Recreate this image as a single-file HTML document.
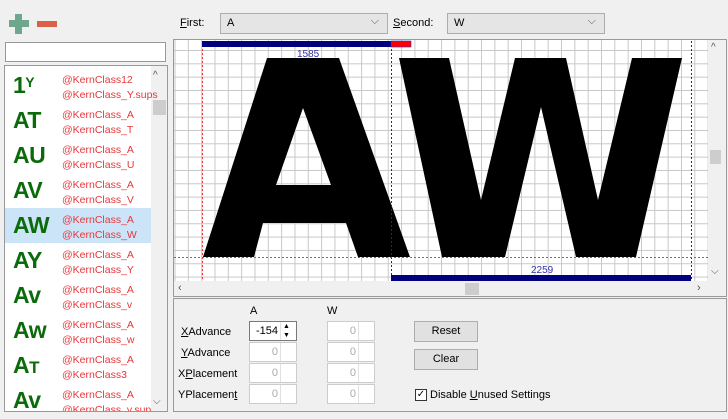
<!DOCTYPE html>
<html><head><style>
*{box-sizing:border-box}
body{margin:0;width:728px;height:419px;background:#f0f0f0;font-family:"Liberation Sans",sans-serif;font-size:11px;color:#000;position:relative;overflow:hidden}
.a{position:absolute}
.row{position:absolute;left:5px;width:146px;height:35px}
.g{position:absolute;left:8px;top:4px;font-weight:bold;font-size:23px;color:#0b6b0b;letter-spacing:-0.5px}
.t{position:absolute;left:57px;top:5px;color:#e8373a;font-size:10.5px;line-height:15px}
.lbl{position:absolute;font-size:11px}
.spin{position:absolute;width:48px;height:20px;background:#fff;border:1px solid #ccc;color:#aaa;text-align:right;padding-right:18px;line-height:18px}
.spin:after{content:"";position:absolute;right:0;top:0;width:15px;height:18px;border-left:1px solid #e0e0e0}
.btn{position:absolute;width:64px;height:21px;background:#e1e1e1;border:1px solid #adadad;text-align:center;line-height:19px}
.combo{position:absolute;height:21px;background:#e5e5e5;border:1px solid #adadad;padding-left:6px;line-height:19px}
.combo:after{content:"⌵";position:absolute;right:8px;top:-2px;color:#555}
</style></head><body>
<!-- plus minus -->
<div class="a" style="left:15px;top:14px;width:7px;height:20px;background:#6fa68e"></div>
<div class="a" style="left:9px;top:20px;width:20px;height:7px;background:#6fa68e"></div>
<div class="a" style="left:37px;top:21px;width:20px;height:6px;background:#dc6048"></div>
<div class="a" style="left:5px;top:42px;width:161px;height:20px;background:#fff;border:1px solid #999"></div>
<!-- list -->
<div class="a" style="left:4px;top:65px;width:164px;height:347px;background:#fff;border:1px solid #999;overflow:hidden">
<div class="a" style="left:146px;top:0;width:16px;height:345px;background:#f0f0f0"></div>
<div class="a" style="left:148px;top:4px;color:#555;font-size:10px">^</div>
<div class="a" style="left:148px;top:34px;width:13px;height:15px;background:#cdcdcd"></div>
<div class="a" style="left:148px;top:330px;color:#555;font-size:10px">⌵</div>
</div>
<div class="row" style="top:68px"><div class="g">1<span style="font-size:14px;vertical-align:6px">Y</span></div><div class="t">@KernClass12<br>@KernClass_Y.sups</div></div>
<div class="row" style="top:103px"><div class="g">AT</div><div class="t">@KernClass_A<br>@KernClass_T</div></div>
<div class="row" style="top:138px"><div class="g">AU</div><div class="t">@KernClass_A<br>@KernClass_U</div></div>
<div class="row" style="top:173px"><div class="g">AV</div><div class="t">@KernClass_A<br>@KernClass_V</div></div>
<div class="row" style="top:208px;background:#cce4f7"><div class="g">AW</div><div class="t">@KernClass_A<br>@KernClass_W</div></div>
<div class="row" style="top:243px"><div class="g">AY</div><div class="t">@KernClass_A<br>@KernClass_Y</div></div>
<div class="row" style="top:278px"><div class="g">Av</div><div class="t">@KernClass_A<br>@KernClass_v</div></div>
<div class="row" style="top:313px"><div class="g">Aw</div><div class="t">@KernClass_A<br>@KernClass_w</div></div>
<div class="row" style="top:348px"><div class="g">A<span style="font-size:17px">T</span></div><div class="t">@KernClass_A<br>@KernClass3</div></div>
<div class="row" style="top:383px;height:28px;overflow:hidden"><div class="g">Av</div><div class="t">@KernClass_A<br>@KernClass_v.sups</div></div>
<!-- top combos -->
<div class="lbl" style="left:180px;top:17px"><u>F</u>irst:</div>
<div class="combo" style="left:220px;top:13px;width:168px">A</div>
<div class="lbl" style="left:393px;top:17px"><u>S</u>econd:</div>
<div class="combo" style="left:447px;top:13px;width:158px">W</div>
<!-- canvas -->
<div class="a" style="left:173px;top:39px;width:554px;height:258px;border:1px solid #999;background:#f0f0f0"></div>
<div class="a" style="left:174px;top:40px;width:534px;height:241px;background-color:#fff;background-image:linear-gradient(90deg,#c8c8c8 1px,transparent 1px),linear-gradient(#c8c8c8 1px,transparent 1px);background-size:13.33px 13.33px;background-position:0.5px 10px"></div>
<svg class="a" style="left:174px;top:40px" width="534" height="241">
<g transform="translate(-174,-40)">
<path d="M267,58H339L410,257H358L346,223H263L254,257H203Z M303,108L331,185H276Z" fill="#000" fill-rule="evenodd"/>
<path d="M399,58H449L481,200L515,58H566L598,200L632,58H682L636,257H576L541,107L505,257H442Z" fill="#000"/>
<line x1="202.5" y1="41" x2="202.5" y2="281" stroke="#f33" stroke-dasharray="2,2"/>
<line x1="391.5" y1="41" x2="391.5" y2="281" stroke="#229" stroke-dasharray="2,2"/>
<line x1="691.5" y1="41" x2="691.5" y2="281" stroke="#229" stroke-dasharray="2,2"/>
<line x1="174" y1="257.5" x2="708" y2="257.5" stroke="#f33" stroke-dasharray="2,2"/>
<rect x="202" y="41" width="189" height="6" fill="#000080"/>
<rect x="391" y="41" width="20" height="6" fill="#f00" stroke="#33c" stroke-width="0.6"/>
<rect x="391" y="275" width="300" height="6" fill="#000080"/>
<text x="297" y="57" font-size="10" fill="#33a" font-family="Liberation Sans">1585</text>
<text x="531" y="273" font-size="10" fill="#33a" font-family="Liberation Sans">2259</text>
</g></svg>
<div class="a" style="left:711px;top:42px;color:#555;font-size:10px">^</div>
<div class="a" style="left:710px;top:150px;width:11px;height:14px;background:#cdcdcd"></div>
<div class="a" style="left:711px;top:266px;color:#555;font-size:10px">⌵</div>
<div class="a" style="left:178px;top:282px;color:#555;font-size:11px">‹</div>
<div class="a" style="left:465px;top:283px;width:14px;height:12px;background:#cdcdcd"></div>
<div class="a" style="left:697px;top:282px;color:#555;font-size:11px">›</div>
<!-- bottom panel -->
<div class="a" style="left:173px;top:298px;width:554px;height:114px;border:1px solid #999"></div>
<div class="lbl" style="left:250px;top:305px">A</div>
<div class="lbl" style="left:327px;top:305px">W</div>
<div class="lbl" style="left:181px;top:326px"><u>X</u>Advance</div>
<div class="lbl" style="left:181px;top:347px"><u>Y</u>Advance</div>
<div class="lbl" style="left:178px;top:368px">X<u>P</u>lacement</div>
<div class="lbl" style="left:178px;top:389px">YPlacemen<u>t</u></div>
<div class="spin" style="left:249px;top:321px;border-color:#7a7a7a;color:#000">-154</div>
<div class="a" style="left:283px;top:322px;font-size:7px;line-height:9px;color:#000">▲<br>▼</div>
<div class="spin" style="left:249px;top:342px">0</div>
<div class="spin" style="left:249px;top:363px">0</div>
<div class="spin" style="left:249px;top:384px">0</div>
<div class="spin" style="left:327px;top:321px">0</div>
<div class="spin" style="left:327px;top:342px">0</div>
<div class="spin" style="left:327px;top:363px">0</div>
<div class="spin" style="left:327px;top:384px">0</div>
<div class="btn" style="left:414px;top:321px">Reset</div>
<div class="btn" style="left:414px;top:349px">Clear</div>
<div class="a" style="left:415px;top:389px;width:12px;height:12px;border:1px solid #333;background:#fff;font-size:10px;line-height:10px;text-align:center">✓</div>
<div class="lbl" style="left:430px;top:389px">Disable <u>U</u>nused Settings</div>
</body></html>
